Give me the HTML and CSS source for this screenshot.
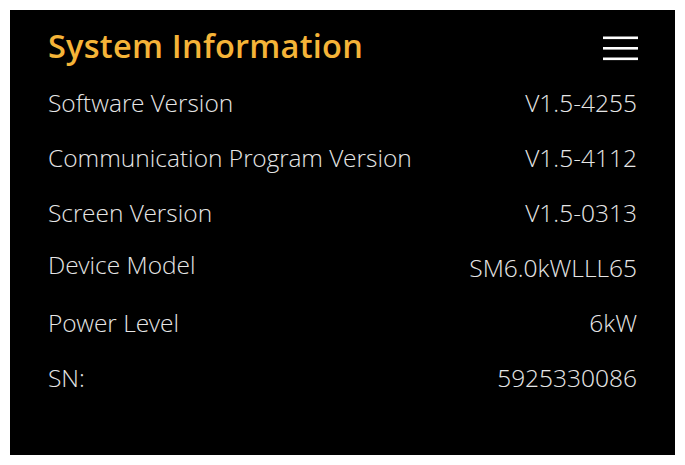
FILE: index.html
```html
<!DOCTYPE html>
<html>
<head>
<meta charset="utf-8">
<link rel="stylesheet" href="styles.css">
</head>
<body>
<div class="panel">
  <div class="header">
    <h1 class="title">System Information</h1>
    <svg class="menu" width="36" height="26" viewBox="0 0 36 26">
      <rect x="0" y="1.5" width="35" height="2.6" fill="#ffffff"/>
      <rect x="0" y="12" width="35" height="2.6" fill="#ffffff"/>
      <rect x="0" y="22.5" width="35" height="2.6" fill="#ffffff"/>
    </svg>
  </div>
  <div class="rows">
    <div class="row"><span>Software Version</span><span>V1.5-4255</span></div>
    <div class="row"><span>Communication Program Version</span><span>V1.5-4112</span></div>
    <div class="row"><span>Screen Version</span><span>V1.5-0313</span></div>
    <div class="row"><span class="raised">Device Model</span><span>SM6.0kWLLL65</span></div>
    <div class="row"><span>Power Level</span><span>6kW</span></div>
    <div class="row"><span>SN:</span><span>5925330086</span></div>
  </div>
</div>
</body>
</html>
```
FILE: styles.css
```css
html, body {
  margin: 0;
  padding: 0;
  background: #ffffff;
}
body {
  padding: 10px;
  font-family: "Open Sans", "Noto Sans", sans-serif;
}
.panel {
  width: 665px;
  height: 445px;
  box-sizing: border-box;
  background: #000000;
  padding: 15px 38px 0 38px;
}
.header {
  display: flex;
  justify-content: space-between;
  align-items: center;
  height: 42px;
}
.title {
  margin: 0;
  font-size: 32.5px;
  font-weight: 600;
  letter-spacing: 0.25px;
  line-height: 42px;
  color: #f5b438;
}
.menu {
  display: block;
  margin-right: -2px;
  margin-top: 4px;
}
.rows {
  margin-top: 8px;
}
.row {
  display: flex;
  justify-content: space-between;
  height: 55px;
  line-height: 55px;
  font-family: "Open Sans Light", "Open Sans", "Noto Sans", sans-serif;
  font-size: 24.5px;
  font-weight: 300;
  color: #e6e6e6;
}
.raised {
  margin-top: -3px;
}
```
